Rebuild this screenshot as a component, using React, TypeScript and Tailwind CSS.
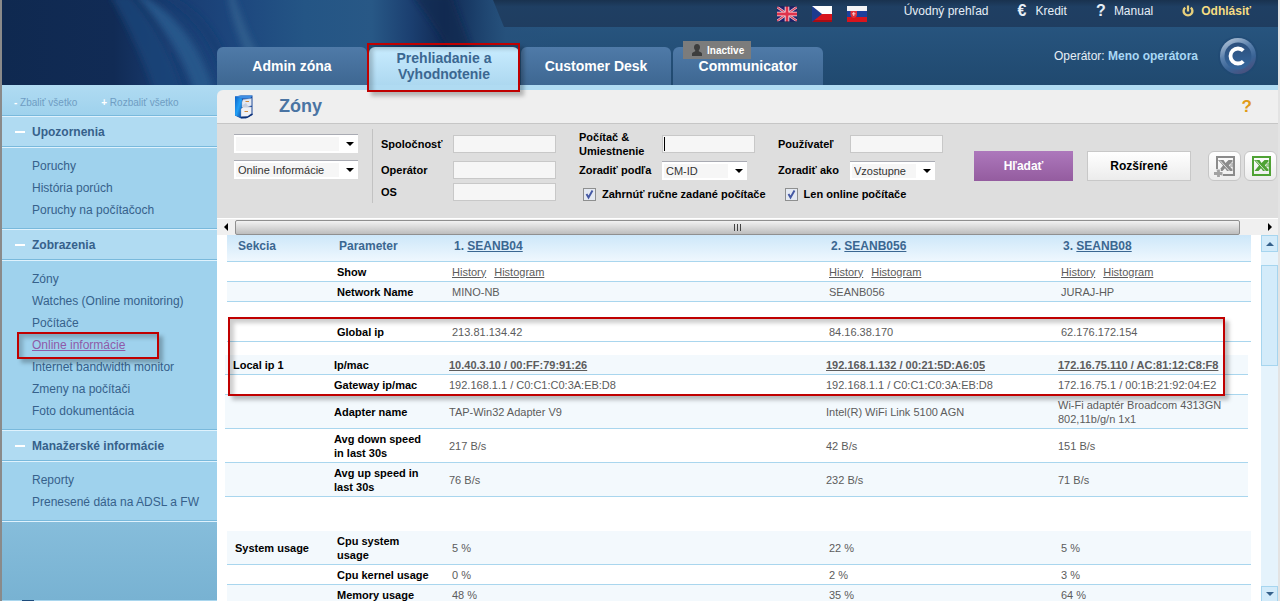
import React from "react";
import type { ReactNode } from "react";

/* ---------- icons ---------- */

function FlagUK() {
  return (
    <svg viewBox="0 0 20 16" className="h-4 w-5" aria-hidden="true">
      <rect width="20" height="16" fill="#22206b" />
      <path d="M0 1L20 15M20 1L0 15" stroke="#e6cfdb" strokeWidth="2.600" />
      <path d="M0 1L20 15M20 1L0 15" stroke="#d9405a" strokeWidth="1.200" />
      <path d="M10 0V16M0 8H20" stroke="#f6e6ea" strokeWidth="4.600" />
      <path d="M10 0V16M0 8H20" stroke="#e0334c" strokeWidth="2.800" />
      <path d="M0 0.500H20M0 15.500H20" stroke="#1c2a52" strokeOpacity=".6" />
    </svg>
  );
}

function FlagCZ() {
  return (
    <svg viewBox="0 0 20 16" className="h-4 w-5" aria-hidden="true">
      <rect width="20" height="8" fill="#fdfdfd" />
      <rect y="8" width="20" height="8" fill="#d8141c" />
      <rect y="14" width="20" height="2" fill="#a80d14" />
      <path d="M0 0L10 8L0 16Z" fill="#1d3b8f" />
    </svg>
  );
}

function FlagSK() {
  return (
    <svg viewBox="0 0 20 16" className="h-4 w-5" aria-hidden="true">
      <rect width="20" height="5" fill="#f4f4f6" />
      <rect y="5" width="20" height="6" fill="#1c3f9c" />
      <rect y="11" width="20" height="5" fill="#d8141c" />
      <path d="M3.500 5H10V8.500Q10 11 6.750 12Q3.500 11 3.500 8.500Z" fill="#e2303a" />
      <path d="M6.750 6V10M5 7.800H8.500" stroke="#f6dfe2" strokeWidth=".9" />
    </svg>
  );
}

function PowerIcon() {
  return (
    <svg viewBox="0 0 12 12" className="size-3" fill="none" stroke="#e6cf7c" aria-hidden="true">
      <path d="M3.200 2.600A4.400 4.400 0 1 0 8.800 2.600" strokeWidth="2.400" />
      <path d="M6 0.500V6.500" strokeWidth="2.200" />
    </svg>
  );
}

function PersonIcon() {
  return (
    <svg viewBox="0 0 10 12" className="h-3 w-[10px]" fill="#3d3d3d" aria-hidden="true">
      <path d="M5 0C3 0 2 1.400 2 3.200C2 4.600 2.600 5.500 3.200 6.200V7.300L0.800 8.600Q0 9 0 10V12H10V10Q10 9 9.200 8.600L6.800 7.300V6.200C7.400 5.500 8 4.600 8 3.200C8 1.400 7 0 5 0Z" />
    </svg>
  );
}

function BrandBadge() {
  return (
    <svg viewBox="0 0 40 40" className="size-10" aria-hidden="true">
      <defs>
        <linearGradient id="rim" x1="0.200" y1="0" x2="0.700" y2="1">
          <stop offset="0" stopColor="#b4c5d8" />
          <stop offset=".4" stopColor="#5a80ac" />
          <stop offset=".7" stopColor="#3a6496" />
          <stop offset="1" stopColor="#4a4f7c" />
        </linearGradient>
        <linearGradient id="core" x1="0" y1="0" x2="0" y2="1">
          <stop offset="0" stopColor="#2c4f7c" />
          <stop offset="1" stopColor="#35669c" />
        </linearGradient>
      </defs>
      <circle cx="20" cy="20" r="20" fill="#1f4674" fillOpacity=".4" />
      <circle cx="20" cy="20" r="18" fill="url(#rim)" />
      <circle cx="20" cy="20" r="13.500" fill="url(#core)" />
      <path d="M25.300 14.700A7.500 7.500 0 1 0 25.300 25.300" fill="none" stroke="#fff" strokeWidth="3.800" />
    </svg>
  );
}

function CabinetIcon() {
  return (
    <svg viewBox="0 0 20 24" className="h-6 w-5" aria-hidden="true">
      <defs>
        <linearGradient id="side" x1="0" y1="0" x2="1" y2="1">
          <stop offset="0" stopColor="#0c62c8" />
          <stop offset=".5" stopColor="#22a0f6" />
          <stop offset="1" stopColor="#0b3f9a" />
        </linearGradient>
      </defs>
      <path d="M1 1.500L7 0.500H18.500V20L12 23.500H7L1 20.500Z" fill="#17479c" />
      <path d="M1 1.500L8 3.500V23L1 20.500Z" fill="url(#side)" />
      <path d="M1 1.500L7 0.500H18.500L16 3.500H8Z" fill="#3f8ee4" />
      <path d="M9 4.500L17.500 3.500V10.500L14 12H8V7Z" fill="#e4e9f3" stroke="#9aa6c0" strokeWidth=".4" />
      <path d="M7 14L9 12H17.500V18.500L13.500 21.500H7Z" fill="#eff1f6" stroke="#8d98b4" strokeWidth=".4" />
      <path d="M8 10.500L12 8L14 11H8Z" fill="#c6cede" />
      <path d="M11.500 6.500H15M10.500 16.500H14" stroke="#d08a3a" strokeWidth="1.200" />
      <path d="M7 22.700L13.500 22.200L18.500 19" stroke="#0d2f74" strokeWidth="1.200" fill="none" />
    </svg>
  );
}

function SheetIcon({ color, plus }: { color: string; plus?: boolean }) {
  return (
    <svg viewBox="0 0 22 22" className="size-[22px]" aria-hidden="true">
      <path fillRule="evenodd" fill={color} d="M2 1H21V21H2ZM4 3V19H19V3Z" />
      <path fill={color} d="M4 5H9.500L11.500 8L14.500 5H18.500V16H13L11 13.200L8.500 16H4.500L9 10.500Z" />
      <path d="M6 5.500L15.500 16" stroke="#f2f2f2" strokeWidth=".8" />
      <path d="M18.500 6.500L14.800 10.200L18.500 14.500Z" fill="#f4f4f4" />
      <path d="M16.500 9H19M16 11H19" stroke={color} strokeWidth="1" />
      {plus && (
        <>
          <path d="M0 18.500H9M4.500 14V22" stroke="#f2f2f2" strokeWidth="4.600" />
          <path d="M0 18.500H8.500M4.500 14.500V22" stroke="#a2a2a2" strokeWidth="2.800" />
        </>
      )}
    </svg>
  );
}

function Backdrop() {
  return (
    <svg
      className="absolute top-0 left-0 h-full w-[560px]"
      viewBox="0 0 560 85"
      preserveAspectRatio="none"
      aria-hidden="true"
    >
      <defs>
        <linearGradient id="sweep" x1="0" y1="0" x2="1" y2="0">
          <stop offset="0" stopColor="#0f2950" />
          <stop offset=".2" stopColor="#112b55" />
          <stop offset=".3" stopColor="#193c71" />
          <stop offset=".42" stopColor="#1d477e" />
          <stop offset=".54" stopColor="#245585" />
          <stop offset=".66" stopColor="#285886" />
          <stop offset=".73" stopColor="#1b3f70" />
          <stop offset=".79" stopColor="#112a54" />
          <stop offset=".84" stopColor="#1a3d68" />
          <stop offset=".9" stopColor="#26517c" stopOpacity=".8" />
          <stop offset="1" stopColor="#26517c" stopOpacity="0" />
        </linearGradient>
        <filter id="soft" x="-20%" y="-20%" width="140%" height="140%">
          <feGaussianBlur stdDeviation="3" />
        </filter>
      </defs>
      <rect width="560" height="85" fill="url(#sweep)" />
      <g filter="url(#soft)">
        <path d="M108 -5C125 25 140 55 152 90H180C168 50 150 20 128 -5Z" fill="#1b4479" fillOpacity=".8" />
        <path d="M140 -5C175 15 198 45 212 90H192C180 55 160 25 134 -5Z" fill="#27568a" />
        <path d="M158 -5C190 15 212 40 224 90H232C226 40 200 10 168 -5Z" fill="#173a70" fillOpacity=".6" />
        <path d="M232 -5C240 20 248 40 260 60H246C238 40 230 20 226 -5Z" fill="#336390" fillOpacity=".8" />
        <path d="M410 -5C425 15 440 35 452 60H472C466 35 453 10 450 -5Z" fill="#0f264f" fillOpacity=".7" />
      </g>
    </svg>
  );
}

/* ---------- shared pieces ---------- */

function Marker({ className }: { className: string }) {
  return (
    <span
      aria-hidden="true"
      className={`pointer-events-none absolute z-10 border-2 border-[#c00000] shadow-[4px_4px_4px_rgba(0,0,0,0.25),inset_4px_4px_4px_rgba(0,0,0,0.2)] ${className}`}
    />
  );
}

function Arrow({ dir, className }: { dir: "up" | "down" | "left" | "right"; className: string }) {
  const shapes = {
    up: "M0 6H8L4 2Z",
    down: "M0 2H8L4 6Z",
    left: "M6 0V8L2 4Z",
    right: "M2 0V8L6 4Z",
  };
  return (
    <svg viewBox="0 0 8 8" className={`size-2 ${className}`} fill="currentColor" aria-hidden="true">
      <path d={shapes[dir]} />
    </svg>
  );
}

/* ---------- header ---------- */

const tabs: { label: ReactNode; active?: boolean; badge?: string }[] = [
  { label: "Admin zóna" },
  { label: "Prehliadanie a Vyhodnotenie", active: true },
  { label: "Customer Desk" },
  { label: "Communicator", badge: "Inactive" },
];

function Header() {
  return (
    <header className="relative flex h-[85px] flex-none flex-col bg-linear-to-b from-[#2a5985] to-[#20496f]">
      <Backdrop />
      <nav className="relative ml-[491px] flex h-[27px] items-start justify-end bg-linear-to-b from-[#19324f] via-[#1f3f63] via-25% to-[#1f3d60] pr-[27px] text-[12px] leading-[22px] text-[#e6eef6] [clip-path:polygon(0_0,100%_0,100%_100%,11px_100%)]">
        <div className="mr-[37px] flex gap-[15px] pt-[6px]">
          <button type="button" aria-label="English"><FlagUK /></button>
          <button type="button" aria-label="Čeština"><FlagCZ /></button>
          <button type="button" aria-label="Slovenčina"><FlagSK /></button>
        </div>
        <div className="flex gap-[29px]">
          <a href="#prehlad">Úvodný prehľad</a>
          <a href="#kredit" className="flex gap-2">
            <b className="w-[10px] text-[16px]">€</b>Kredit
          </a>
          <a href="#manual" className="flex gap-2">
            <b className="w-[10px] text-[16px]">?</b>Manual
          </a>
          <a href="#odhlasit" className="flex items-center gap-[7px] font-bold text-[#f5dc82]">
            <PowerIcon />
            Odhlásiť
          </a>
        </div>
      </nav>
      <div className="relative flex flex-1 justify-between pl-[215px]">
        <div className="flex items-end gap-[2px]">
          {tabs.map((t, i) => (
            <div key={i} className="relative">
              <a
                href="#tab"
                className={
                  t.active
                    ? "flex h-[38px] w-[150px] items-center justify-center rounded-t-md bg-linear-to-b from-[#c8ecff] to-[#add8f0] px-5 text-center text-[14px] leading-4 font-bold text-[#3b6791]"
                    : "flex h-[38px] w-[150px] items-center justify-center rounded-t-md bg-linear-to-b from-[#4f7aa8] to-[#3e6792] text-[14px] font-bold text-white"
                }
              >
                {t.label}
              </a>
              {t.active && <Marker className="-top-[4px] -left-[2px] h-[49px] w-[153px]" />}
              {t.badge && (
                <span className="absolute -top-[6px] left-[10px] flex h-[18px] w-[68px] items-center gap-[5px] bg-[#7c7c7c] pl-[9px] text-[10px] font-bold text-white">
                  <PersonIcon />
                  {t.badge}
                </span>
              )}
            </div>
          ))}
        </div>
        <div className="flex h-[58px] items-center gap-5 pr-5 text-[12px] text-[#e6eef6]">
          <span>
            Operátor: <b className="text-[#a9d8f5]">Meno operátora</b>
          </span>
          <BrandBadge />
        </div>
      </div>
    </header>
  );
}

/* ---------- sidebar ---------- */

const menu = [
  { title: "Upozornenia", items: ["Poruchy", "História porúch", "Poruchy na počítačoch"] },
  {
    title: "Zobrazenia",
    items: [
      "Zóny",
      "Watches (Online monitoring)",
      "Počítače",
      "Online informácie",
      "Internet bandwidth monitor",
      "Zmeny na počítači",
      "Foto dokumentácia",
    ],
  },
  { title: "Manažerské informácie", items: ["Reporty", "Prenesené dáta na ADSL a FW"] },
];

const current = "Online informácie";

function Groove() {
  return <div className="h-[2px] flex-none border-t border-[#79b9dc] bg-[#dff2fd]" />;
}

function Sidebar() {
  return (
    <aside className="flex w-[215px] flex-none flex-col overflow-hidden bg-[#9fd2ed] text-[12px] text-[#36618b]">
      <div className="flex h-[30px] flex-none items-center gap-6 bg-linear-to-b from-[#b0dbf2] to-[#9fd2ed] pt-1 pl-3 text-[10px] text-[#6f9dc3]">
        <button type="button"><b className="text-white">-</b> Zbaliť všetko</button>
        <button type="button"><b className="text-white">+</b> Rozbaliť všetko</button>
      </div>
      <Groove />
      {menu.map((section) => (
        <section key={section.title} className="flex-none">
          <h2 className="flex h-[29px] items-center bg-[#b0dbf2] pl-[13px] font-bold">
            <span className="mr-[7px] h-[2px] w-[10px] bg-white" />
            {section.title}
          </h2>
          <Groove />
          <ul className="py-[7px]">
            {section.items.map((item) => (
              <li key={item} className="relative h-[22px] pl-[30px] leading-[22px]">
                <a href="#menu" className={item === current ? "text-[#8f5aa8] underline" : ""}>
                  {item}
                </a>
                {item === current && <Marker className="-top-[2px] left-[15px] h-[27px] w-[142px]" />}
              </li>
            ))}
          </ul>
          <Groove />
        </section>
      ))}
      <div className="flex-1 bg-linear-to-b from-[#86bddb] to-[#78b2d2]" />
      <div className="flex h-px flex-none bg-[#a9d6ee] pl-5">
        <span className="w-3 bg-[#1c4b7c]" />
      </div>
    </aside>
  );
}

/* ---------- filter bar ---------- */

function Dropdown({ id, label, value, className }: { id: string; label?: string; value: string; className: string }) {
  return (
    <div className={`relative h-[19px] border-t border-[#a9abb3] ${className}`}>
      <select
        id={id}
        aria-label={label}
        defaultValue={value}
        className="block h-[18px] w-full appearance-none border-2 border-r-[19px] border-white bg-[#f6f6f6] pl-[2px] text-[11px] leading-[14px] font-normal text-[#333]"
      >
        <option>{value}</option>
      </select>
      <Arrow dir="down" className="pointer-events-none absolute top-[5px] right-1 text-black" />
    </div>
  );
}

function Field({ id, caret }: { id: string; caret?: boolean }) {
  return (
    <div className="relative">
      <input
        id={id}
        type="text"
        className="block h-[18px] w-full border border-[#c8c8c8] bg-[#f6f6f6] px-[3px] text-[11px] font-normal"
      />
      {caret && <span className="pointer-events-none absolute top-[2px] left-[2px] h-[14px] w-px bg-black" />}
    </div>
  );
}

function Tick({ label }: { label: string }) {
  return (
    <label className="flex items-center gap-[6px]">
      <span className="relative flex size-[13px]">
        <input
          type="checkbox"
          defaultChecked
          className="peer size-[13px] appearance-none border border-[#8e8f8f] bg-[#e4e9f2]"
        />
        <svg viewBox="0 0 13 13" className="pointer-events-none absolute inset-0 hidden peer-checked:block" aria-hidden="true">
          <path d="M3.500 6L5.500 9.500L9.500 2.500" fill="none" stroke="#4458a4" strokeWidth="1.900" />
        </svg>
      </span>
      {label}
    </label>
  );
}

function Filters() {
  return (
    <form className="flex h-[94px] flex-none items-center bg-[#dedede] pr-px pb-[10px] pl-[17px] text-[11px] font-bold text-black">
      <div className="flex h-[74px] w-[139px] flex-none flex-col gap-[7px] border-r border-[#c2c2c2] pt-[5px]">
        <Dropdown id="preset" label="Filter" value="" className="w-[124px]" />
        <Dropdown id="view" label="Zobrazenie" value="Online Informácie" className="w-[124px]" />
      </div>
      <div className="ml-2 grid flex-none grid-cols-[72px_103px_23px_83px_93px_23px_72px_93px] grid-rows-[26px_26px_18px] items-center leading-[14px]">
        <label htmlFor="company">Spoločnosť</label>
        <Field id="company" />
        <label htmlFor="computer" className="col-start-4">Počítač &amp;<br />Umiestnenie</label>
        <Field id="computer" caret />
        <label htmlFor="user" className="col-start-7">Používateľ</label>
        <Field id="user" />
        <label htmlFor="operator">Operátor</label>
        <Field id="operator" />
        <label htmlFor="sort" className="col-start-4">Zoradiť podľa</label>
        <Dropdown id="sort" value="CM-ID" className="w-[85px]" />
        <label htmlFor="order" className="col-start-7">Zoradiť ako</label>
        <Dropdown id="order" value="Vzostupne" className="w-[85px]" />
        <label htmlFor="os">OS</label>
        <Field id="os" />
        <div className="col-span-5 col-start-4 flex gap-[19px] pt-1 pl-1">
          <Tick label="Zahrnúť ručne zadané počítače" />
          <Tick label="Len online počítače" />
        </div>
      </div>
      <div className="ml-auto flex flex-none items-center text-[12px]">
        <button type="button" className="h-[30px] w-[99px] bg-linear-to-b from-[#ad78bc] to-[#945c9f] font-bold text-white">
          Hľadať
        </button>
        <button type="button" className="ml-[14px] h-[30px] w-[104px] border border-[#c8c8c8] bg-linear-to-b from-white to-[#ececec] font-bold">
          Rozšírené
        </button>
        <button type="button" aria-label="Pridať do exportu" className="ml-[17px] flex h-[30px] w-[33px] items-center justify-center rounded-md border border-[#c6c6c6] bg-linear-to-b from-white to-[#ececec]">
          <SheetIcon color="#8b8b8b" plus />
        </button>
        <button type="button" aria-label="Export do Excelu" className="ml-[3px] flex h-[30px] w-[33px] items-center justify-center rounded-md border border-[#c6c6c6] bg-linear-to-b from-white to-[#ececec]">
          <SheetIcon color="#4fa234" />
        </button>
      </div>
    </form>
  );
}

function HorizontalScrollbar() {
  return (
    <div className="flex h-[17px] flex-none items-center border-t border-white bg-[#f0f0f0] text-black">
      <Arrow dir="left" className="mx-[5px] flex-none" />
      <div className="flex h-[15px] flex-1 items-center justify-center gap-[2px] rounded-xs border border-[#8f8f8f] bg-linear-to-b from-[#f2f2f2] via-[#d8d8d8] via-50% to-[#bdbdbd]">
        <span className="h-[7px] w-px bg-[#444]" />
        <span className="h-[7px] w-px bg-[#444]" />
        <span className="h-[7px] w-px bg-[#444]" />
      </div>
      <Arrow dir="right" className="mr-1 ml-[26px] flex-none" />
    </div>
  );
}

function VerticalScrollbar() {
  return (
    <div className="flex w-[17px] flex-none flex-col bg-[#e5f3fc] text-[#36618b]">
      <div className="flex h-[17px] flex-none items-center justify-center border border-[#a6d5ef] bg-[#d3ebfa]">
        <Arrow dir="up" className="" />
      </div>
      <div className="mt-[13px] h-[101px] flex-none border border-[#a6d5ef] bg-[#d3ebfa]" />
      <div className="flex-1" />
      <div className="flex h-[15px] flex-none items-center justify-center border border-b-0 border-[#a6d5ef] bg-[#d3ebfa]">
        <Arrow dir="down" className="" />
      </div>
    </div>
  );
}

/* ---------- results ---------- */

type Row = { section?: string; name: string; values: ReactNode[]; tall?: boolean; shaded?: boolean; strong?: boolean };

function Links() {
  return (
    <span className="flex gap-2">
      <a href="#history" className="underline">History</a>
      <a href="#histogram" className="underline">Histogram</a>
    </span>
  );
}

function Columns({ inset }: { inset?: boolean }) {
  return (
    <colgroup>
      <col className={inset ? "w-[104px]" : "w-[105px]"} />
      <col className="w-[115px]" />
      <col className="w-[377px]" />
      <col className="w-[232px]" />
      <col />
    </colgroup>
  );
}

const tableClass =
  "w-full table-fixed border-separate border-spacing-0 [&_td]:border-b [&_td]:border-[#a9d6ee] [&_th]:border-b [&_th]:border-[#a9d6ee]";

function Rows({ rows }: { rows: Row[] }) {
  return (
    <tbody>
      {rows.map((r) => (
        <tr key={r.name} className={`${r.tall ? "h-[34px]" : "h-5"} ${r.shaded ? "bg-[#f3f9fd]" : ""}`}>
          <th className="pl-2 text-left font-bold whitespace-nowrap text-black">{r.section}</th>
          <th className="pr-4 pl-[5px] text-left font-bold text-black">{r.name}</th>
          {r.values.map((v, i) => (
            <td key={i} className="pl-[5px]">
              {r.strong ? <a href="#host" className="font-bold underline">{v}</a> : v}
            </td>
          ))}
        </tr>
      ))}
    </tbody>
  );
}

const summary: Row[] = [
  { name: "Show", values: [<Links />, <Links />, <Links />] },
  { name: "Network Name", values: ["MINO-NB", "SEANB056", "JURAJ-HP"], shaded: true },
];

const globalIp: Row[] = [{ name: "Global ip", values: ["213.81.134.42", "84.16.38.170", "62.176.172.154"] }];

const localIp: Row[] = [
  {
    section: "Local ip 1",
    name: "Ip/mac",
    values: ["10.40.3.10 / 00:FF:79:91:26", "192.168.1.132 / 00:21:5D:A6:05", "172.16.75.110 / AC:81:12:C8:F8"],
    shaded: true,
    strong: true,
  },
  {
    name: "Gateway ip/mac",
    values: ["192.168.1.1 / C0:C1:C0:3A:EB:D8", "192.168.1.1 / C0:C1:C0:3A:EB:D8", "172.16.75.1 / 00:1B:21:92:04:E2"],
  },
];

const adapter: Row[] = [
  {
    name: "Adapter name",
    values: ["TAP-Win32 Adapter V9", "Intel(R) WiFi Link 5100 AGN", <>Wi-Fi adaptér Broadcom 4313GN<br />802,11b/g/n 1x1</>],
    tall: true,
    shaded: true,
  },
  { name: "Avg down speed in last 30s", values: ["217 B/s", "42 B/s", "151 B/s"], tall: true },
  { name: "Avg up speed in last 30s", values: ["76 B/s", "232 B/s", "71 B/s"], tall: true, shaded: true },
];

const usage: Row[] = [
  { section: "System usage", name: "Cpu system usage", values: ["5 %", "22 %", "5 %"], tall: true, shaded: true },
  { name: "Cpu kernel usage", values: ["0 %", "2 %", "3 %"] },
  { name: "Memory usage", values: ["48 %", "35 %", "64 %"], shaded: true },
];

const hosts = ["SEANB04", "SEANB056", "SEANB08"];

function Results() {
  return (
    <div className="flex min-h-0 flex-1 bg-white">
      <div className="min-w-0 flex-1 overflow-hidden pr-[10px] text-[11px] leading-[14px] text-[#5c5c5c]">
        <div className="pl-[10px]">
          <table className={tableClass}>
            <Columns />
            <thead>
              <tr className="h-[27px] bg-linear-to-b from-[#cde7f9] to-[#f0f8fe] text-left text-[12px] text-[#3b6791]">
                <th className="pb-1 pl-[11px]">Sekcia</th>
                <th className="pb-1 pl-[7px]">Parameter</th>
                {hosts.map((h, i) => (
                  <th key={h} className="pb-1 pl-[7px]">
                    {i + 1}. <a href="#host" className="underline">{h}</a>
                  </th>
                ))}
              </tr>
            </thead>
            <Rows rows={summary} />
          </table>
        </div>
        <div className="relative mt-5">
          <div className="pl-[10px]">
            <table className={tableClass}>
              <Columns />
              <Rows rows={globalIp} />
            </table>
          </div>
          <div className="mt-[13px] pr-[3px] pl-2">
            <table className={tableClass}>
              <Columns inset />
              <Rows rows={localIp} />
            </table>
          </div>
          <Marker className="-top-[5px] right-[26px] -bottom-px left-[11px]" />
        </div>
        <div className="pr-[3px] pl-2">
          <table className={tableClass}>
            <Columns inset />
            <Rows rows={adapter} />
          </table>
        </div>
        <div className="mt-[34px] pl-[10px]">
          <table className={tableClass}>
            <Columns />
            <Rows rows={usage} />
          </table>
        </div>
      </div>
      <VerticalScrollbar />
    </div>
  );
}

/* ---------- page ---------- */

export default function App() {
  return (
    <div className="flex h-screen flex-col overflow-hidden border-r-2 border-l-2 border-r-[#e3e3e3] border-l-[#8a8a8a] bg-white font-['Liberation_Sans',Arial,sans-serif]">
      <Header />
      <div className="flex min-h-0 flex-1">
        <Sidebar />
        <main className="flex min-w-0 flex-1 flex-col bg-[#b0dbf2] pt-[5px]">
          <div className="flex h-[34px] flex-none items-center rounded-tl-md border-b border-[#c6c6c6] bg-[#efefef] pr-[26px] pl-[17px]">
            <CabinetIcon />
            <h1 className="ml-[25px] flex-1 text-[18px] font-bold text-[#4a74a3]">Zóny</h1>
            <button type="button" aria-label="Pomocník" className="text-[17px] font-bold text-[#e09a17]">?</button>
          </div>
          <Filters />
          <HorizontalScrollbar />
          <Results />
        </main>
      </div>
    </div>
  );
}
